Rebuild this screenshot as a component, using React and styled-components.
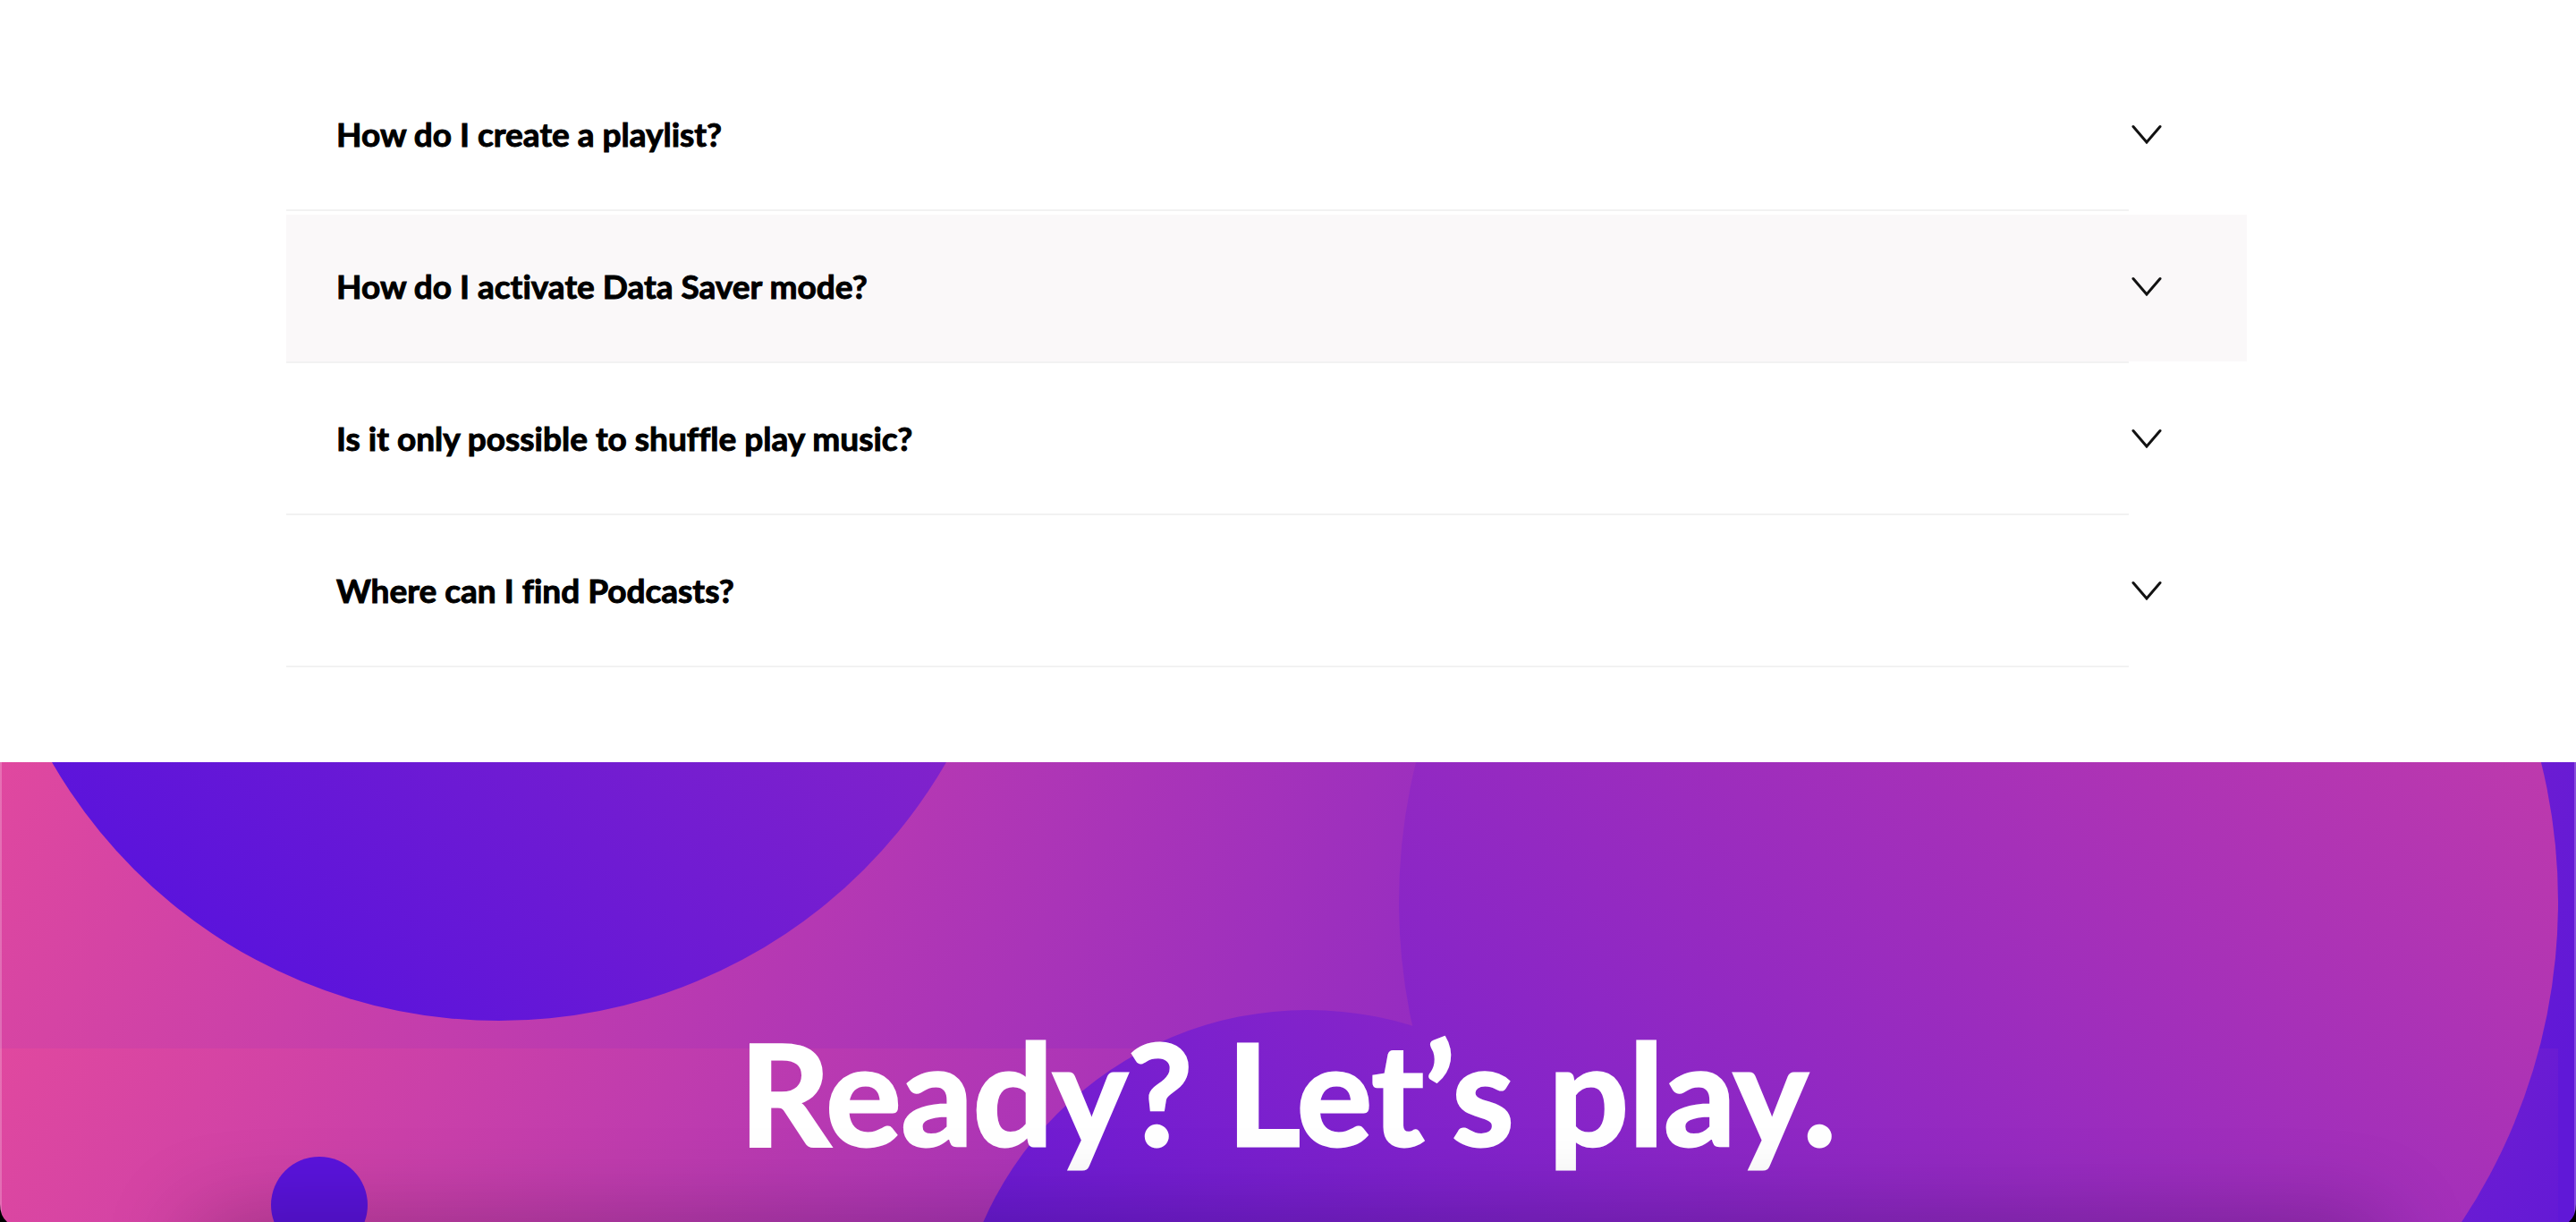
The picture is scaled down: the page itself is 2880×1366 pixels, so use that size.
import React, { useState } from "react"
import styled, { createGlobalStyle } from "styled-components";

const preguntas = [
    { id: 1, titulo: 'How do I create a playlist?' },
    { id: 2, titulo: 'How do I activate Data Saver mode?' },
    { id: 3, titulo: 'Is it only possible to shuffle play music?' },
    { id: 4, titulo: 'Where can I find Podcasts?' },
];

const Flecha = () => (
    <FlechaSvg viewBox="0 0 36 24" aria-hidden="true">
        <path d="M3 4.5 L18 22 L33 4.5" />
    </FlechaSvg>
)

const Fondo = () => (
    <FondoSvg viewBox="0 0 2880 514" preserveAspectRatio="xMidYMin slice" aria-hidden="true">
        <defs>
            <linearGradient id="base" gradientUnits="userSpaceOnUse" x1="0" y1="0" x2="2100" y2="1450">
                <stop offset="0" stopColor="#e0489f" />
                <stop offset="0.5" stopColor="#9f30bd" />
                <stop offset="1" stopColor="#6018d7" />
            </linearGradient>
            <linearGradient id="baseAbajo" href="#base" gradientTransform="translate(0 320)" />
            <linearGradient id="circulos" gradientUnits="userSpaceOnUse" x1="-17" y1="21" x2="1085" y2="-1401">
                <stop offset="0" stopColor="#5a13dc" />
                <stop offset="0.4" stopColor="#8323ca" />
                <stop offset="1" stopColor="#bf3aac" />
            </linearGradient>
        </defs>
        <rect width="2880" height="514" fill="url(#base)" />
        <rect y="320" width="2860" height="194" fill="url(#baseAbajo)" />
        <g fill="url(#circulos)">
            <circle cx="558" cy="-288" r="577" />
            <circle cx="357" cy="495" r="54" />
            <circle cx="1462" cy="673" r="396" />
            <circle cx="2212" cy="156" r="648" />
        </g>
    </FondoSvg>
)

const App = () => {
    const [activa, setActiva] = useState(2);

    return (
        <>
            <Global />
            <main>
                <PreguntasSection>
                    {preguntas.map(pregunta => (
                        <Pregunta key={pregunta.id}>
                            <PreguntaBtn
                                type="button"
                                $activa={activa === pregunta.id}
                                onMouseEnter={() => setActiva(pregunta.id)}
                            >
                                {pregunta.titulo}
                                <Flecha />
                            </PreguntaBtn>
                            <Separador />
                        </Pregunta>
                    ))}
                </PreguntasSection>
                <Portada>
                    <Fondo />
                    <Titulo>Ready? Let’s play.</Titulo>
                    <Borde>
                        <Esquina viewBox="0 0 8 20" aria-hidden="true"><path d="M0 0 Q0 13 8 20 H0 Z" /></Esquina>
                        <Esquina viewBox="0 0 8 20" aria-hidden="true"><path d="M8 0 Q8 13 0 20 H8 Z" /></Esquina>
                    </Borde>
                </Portada>
            </main>
        </>
    )
}

export default App

const Global = createGlobalStyle`
body{
    margin: 0;
    background: #fff;
    font-family: Lato, "Liberation Sans", sans-serif;
    font-variant-ligatures: none;
}
`;

const PreguntasSection = styled.section`
display: flex;
flex-direction: column;
gap: 4px;
padding: 70px 368px 106px 320px;

@media screen and (max-width: 1400px) {
    padding: 70px 24px 106px 24px;
}
`;

const Pregunta = styled.div`
display: flex;
flex-direction: column;
`;

const PreguntaBtn = styled.button`
display: flex;
align-items: center;
justify-content: space-between;
min-height: 164px;
padding: 0 94px 6px 56px;
border: 0;
background: ${props => props.$activa ? '#faf8f9' : 'transparent'};
color: #000;
font-family: inherit;
font-size: 37px;
font-variant-ligatures: inherit;
font-weight: 700;
text-align: left;
cursor: pointer;
-webkit-text-stroke: 1px #000;
`;

const Separador = styled.hr`
width: auto;
height: 2px;
margin: 0 132px 0 0;
border: 0;
background: #f2f2f2;
`;

const FlechaSvg = styled.svg`
flex: none;
width: 36px;
height: 24px;
fill: none;
stroke: #121212;
stroke-width: 3;
stroke-linecap: round;
`;

const Portada = styled.section`
position: relative;
overflow: hidden;
padding: 288px 24px 66px;
text-align: center;

/* sombra inferior */
&::after{
    content: "";
    position: absolute;
    top: 100%;
    left: 220px;
    right: 220px;
    height: 100px;
    box-shadow: 0 0 100px rgba(0, 0, 0, 0.26);
}
`;

const FondoSvg = styled.svg`
position: absolute;
inset: 0;
width: 100%;
height: 100%;
`;

const Titulo = styled.h2`
position: relative;
margin: 0;
color: #fff;
font-size: 158px;
font-weight: 700;
line-height: 160px;
-webkit-text-stroke: 3px #fff;
`;

const Borde = styled.div`
position: absolute;
inset: 0;
display: flex;
align-items: flex-end;
justify-content: space-between;
box-shadow: inset 2px 0 rgba(255, 255, 255, 0.22), inset -2px 0 rgba(255, 255, 255, 0.22);
pointer-events: none;
`;

const Esquina = styled.svg`
width: 8px;
height: 20px;
fill: #000;
`;
